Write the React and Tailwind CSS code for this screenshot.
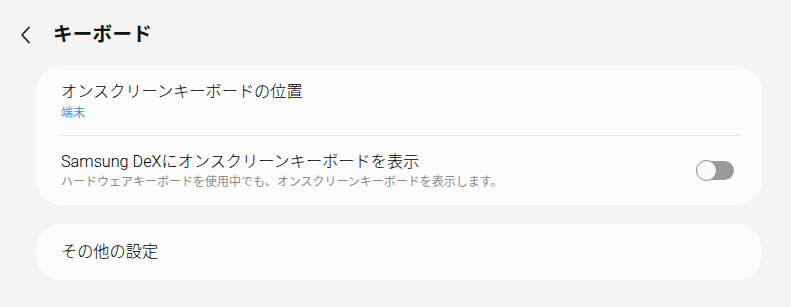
import React from "react";

export default function App() {
  return (
    <div
      className="w-[791px] h-[307px] bg-[#f4f4f4] overflow-hidden"
      style={{ fontFamily: '"Roboto", "Noto Sans CJK JP", sans-serif' }}
    >
      <div className="flex items-center h-[66px] pl-[18px] pt-[3px]">
        <svg width="16" height="20" viewBox="0 0 16 20" className="mt-[1px]">
          <path d="M11 2.5 L4 10 L11 17.5" fill="none" stroke="#222" strokeWidth="1.8" strokeLinecap="round" strokeLinejoin="round" />
        </svg>
        <div className="ml-[19px] text-[19.5px] font-bold text-[#111] tracking-[0.3px]">キーボード</div>
      </div>
      <div className="mx-[36px] w-[726px] bg-[#fcfcfc] rounded-[26px] pl-[25px] pr-[21px]">
        <div className="pt-[14px] pb-[14px] border-b border-[#e6e6e6]">
          <div className="text-[16.2px] leading-[24px] text-[#000] font-light">オンスクリーンキーボードの位置</div>
          <div className="text-[12px] leading-[16px] text-[#3c8fd0] mt-[1px]">端末</div>
        </div>
        <div className="flex items-center justify-between pt-[14px] pb-[15px]">
          <div>
            <div className="text-[16.2px] leading-[24px] text-[#000] font-light">Samsung DeXにオンスクリーンキーボードを表示</div>
            <div className="text-[12px] leading-[16px] text-[#8c8c8c]">ハードウェアキーボードを使用中でも、オンスクリーンキーボードを表示します。</div>
          </div>
          <div className="relative w-[38px] h-[21px] mr-[7px]">
            <div className="absolute left-[8px] top-[1px] w-[30px] h-[19px] rounded-full bg-[#9a9a9a]" />
            <div className="absolute left-0 top-0 w-[21px] h-[21px] rounded-full bg-[#fafafa] border-[1.5px] border-[#8a8a8a]" />
          </div>
        </div>
      </div>
      <div className="mx-[36px] mt-[19px] w-[726px] h-[56px] bg-[#fcfcfc] rounded-[26px] px-[25px] flex items-center">
        <div className="text-[16.2px] text-[#000] font-light">その他の設定</div>
      </div>
    </div>
  );
}
